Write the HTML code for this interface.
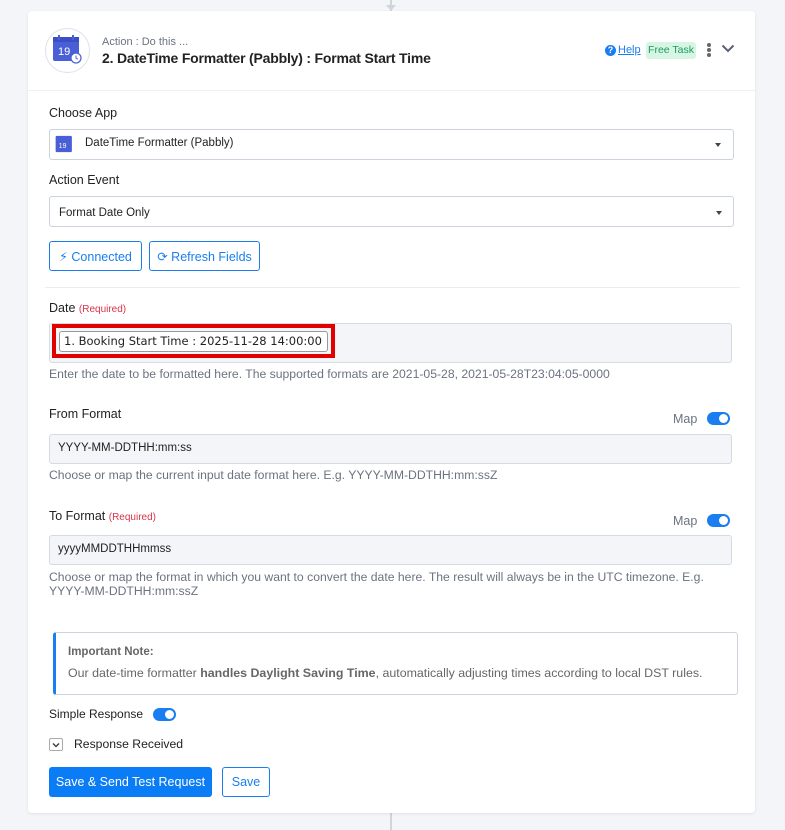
<!DOCTYPE html>
<html><head><style>
*{box-sizing:border-box;margin:0;padding:0}
body{width:785px;height:830px;background:#f3f5f8;font-family:"Liberation Sans",sans-serif;position:relative;overflow:hidden;color:#222}
.a{position:absolute}
.card{left:28px;top:11px;width:727px;height:802px;background:#fff;border-radius:4px;box-shadow:0 1px 3px rgba(0,0,0,.08)}
.lbl{font-size:12.5px;color:#222}
.box{border:1px solid #ccd3dc;border-radius:3px;background:#fff}
.gbox{border:1px solid #d5dbe3;border-radius:3px;background:#f3f5f8}
.help{font-size:12.2px;color:#6b7380}
.btn{border:1px solid #1a7ef0;border-radius:3px;color:#1a7ef0;font-size:12.5px;display:flex;align-items:center;justify-content:center}
.tog{width:23px;height:13px;border-radius:7px;background:#1a7ef0}
.tog::after{content:"";position:absolute;right:2px;top:2px;width:9px;height:9px;border-radius:50%;background:#fff}
.caret{width:0;height:0;border-left:3.5px solid transparent;border-right:3.5px solid transparent;border-top:4px solid #444}
</style></head><body>
<div class="a" style="left:390px;top:0;width:2px;height:11px;background:#cfd5dd"></div>
<div class="a" style="left:390px;top:813px;width:2px;height:17px;background:#cfd5dd"></div>
<div class="a" style="left:386px;top:5px;width:0;height:0;border-left:5px solid transparent;border-right:5px solid transparent;border-top:6px solid #cfd5dd"></div>
<div class="a card"></div>
<!-- header -->
<div class="a" style="left:45px;top:28px;width:45px;height:45px;border-radius:50%;border:1px solid #dde3ee;background:#fff"></div>
<svg class="a" style="left:52px;top:34px" width="32" height="32" viewBox="0 0 32 32"><rect x="1" y="3" width="26" height="24" rx="2" fill="#4a5fd6"/><rect x="1" y="3" width="26" height="5" fill="#3a4fc6"/><rect x="6" y="1" width="2" height="5" fill="#4a5fd6"/><rect x="20" y="1" width="2" height="5" fill="#4a5fd6"/><text x="6" y="21" font-size="11" fill="#fff" font-family="Liberation Sans">19</text><circle cx="24" cy="24" r="5" fill="#fff" stroke="#4a5fd6" stroke-width="1.2"/><path d="M24 21.5V24l1.8 1.2" stroke="#4a5fd6" fill="none" stroke-width="1"/></svg>
<div class="a" style="left:102px;top:36px;font-size:11px;color:#6b7380">Action : Do this ...</div>
<div class="a" style="left:102px;top:50px;font-size:14px;font-weight:bold;color:#222;letter-spacing:-0.2px">2. DateTime Formatter (Pabbly) : Format Start Time</div>
<div class="a" style="left:605px;top:45px;width:11px;height:11px;border-radius:50%;background:#1a7ef0;color:#fff;font-size:9px;font-weight:bold;text-align:center;line-height:11px">?</div>
<div class="a" style="left:618px;top:44px;font-size:11px;color:#1a7ef0;text-decoration:underline">Help</div>
<div class="a" style="left:646px;top:42px;width:50px;height:17px;border-radius:3px;background:#d6f5e4;color:#1e9b5a;font-size:10.5px;text-align:center;line-height:17px">Free Task</div>
<div class="a" style="left:707px;top:43px;width:4px;height:4px;border-radius:50%;background:#666;box-shadow:0 5px 0 #666,0 10px 0 #666"></div>
<svg class="a" style="left:721px;top:44px" width="14" height="9"><path d="M1.5 1.5L7 7l5.5-5.5" stroke="#5a6270" stroke-width="2" fill="none"/></svg>
<div class="a" style="left:28px;top:90px;width:727px;height:1px;background:#eaf0f7"></div>
<!-- choose app -->
<div class="a lbl" style="left:49px;top:106px">Choose App</div>
<div class="a box" style="left:49px;top:129px;width:685px;height:31px"></div>
<svg class="a" style="left:55px;top:134px" width="20" height="20" viewBox="0 0 32 32"><rect x="1" y="3" width="26" height="26" rx="2" fill="#4a5fd6"/><text x="6" y="22" font-size="11" fill="#fff" font-family="Liberation Sans">19</text></svg>
<div class="a" style="left:85px;top:137px;font-size:11.5px">DateTime Formatter (Pabbly)</div>
<div class="a caret" style="left:715px;top:143px"></div>
<div class="a lbl" style="left:49px;top:173px">Action Event</div>
<div class="a box" style="left:49px;top:196px;width:685px;height:31px"></div>
<div class="a" style="left:59px;top:207px;font-size:11.5px">Format Date Only</div>
<div class="a caret" style="left:716px;top:211px"></div>
<div class="a btn" style="left:49px;top:241px;width:93px;height:30px">⚡︎&nbsp;Connected</div>
<div class="a btn" style="left:149px;top:241px;width:111px;height:30px">⟳ Refresh Fields</div>
<div class="a" style="left:45px;top:287px;width:695px;height:1px;background:#eaeef3"></div>
<!-- date -->
<div class="a lbl" style="left:49px;top:301px">Date <span style="font-size:10px;color:#d9334a">(Required)</span></div>
<div class="a gbox" style="left:49px;top:323px;width:683px;height:40px"></div>
<div class="a" style="left:52px;top:324px;width:283px;height:34px;border:4px solid #e00000"></div>
<div class="a" style="left:59px;top:331px;width:269px;height:21px;border:1px solid #999;border-radius:3px;background:#fff;font-family:'DejaVu Sans',sans-serif;font-size:11.5px;line-height:19px;padding-left:4px;white-space:nowrap">1. Booking Start Time : 2025-11-28 14:00:00</div>
<div class="a help" style="left:49px;top:367px">Enter the date to be formatted here. The supported formats are 2021-05-28, 2021-05-28T23:04:05-0000</div>
<!-- from -->
<div class="a lbl" style="left:49px;top:407px">From Format</div>
<div class="a" style="left:673px;top:412px;font-size:12.5px;color:#6b7380">Map</div>
<div class="a tog" style="left:707px;top:412px"></div>
<div class="a gbox" style="left:49px;top:434px;width:683px;height:30px"></div>
<div class="a" style="left:58px;top:442px;font-size:11.5px">YYYY-MM-DDTHH:mm:ss</div>
<div class="a help" style="left:49px;top:468px">Choose or map the current input date format here. E.g. YYYY-MM-DDTHH:mm:ssZ</div>
<!-- to -->
<div class="a lbl" style="left:49px;top:509px">To Format <span style="font-size:10px;color:#d9334a">(Required)</span></div>
<div class="a" style="left:673px;top:514px;font-size:12.5px;color:#6b7380">Map</div>
<div class="a tog" style="left:707px;top:514px"></div>
<div class="a gbox" style="left:49px;top:535px;width:683px;height:30px"></div>
<div class="a" style="left:58px;top:543px;font-size:11.5px">yyyyMMDDTHHmmss</div>
<div class="a help" style="left:49px;top:570px;width:690px;line-height:14px">Choose or map the format in which you want to convert the date here. The result will always be in the UTC timezone. E.g.<br>YYYY-MM-DDTHH:mm:ssZ</div>
<!-- note -->
<div class="a" style="left:53px;top:632px;width:685px;height:63px;border:1px solid #ccd3dc;border-left:3px solid #1a7ef0;border-radius:3px"></div>
<div class="a" style="left:68px;top:646px;font-size:11.5px;font-weight:bold;color:#666">Important Note:</div>
<div class="a" style="left:68px;top:666px;font-size:12.4px;color:#666">Our date-time formatter <b>handles Daylight Saving Time</b>, automatically adjusting times according to local DST rules.</div>
<div class="a" style="left:49px;top:707px;font-size:12px;color:#222">Simple Response</div>
<div class="a tog" style="left:153px;top:708px"></div>
<div class="a" style="left:49px;top:738px;width:14px;height:13px;border:1px solid #aaa;border-radius:2px"></div>
<svg class="a" style="left:52px;top:742px" width="8" height="6"><path d="M1 1.5l3 3 3-3" stroke="#333" stroke-width="1.3" fill="none"/></svg>
<div class="a" style="left:74px;top:737px;font-size:12.2px;color:#222">Response Received</div>
<div class="a" style="left:49px;top:767px;width:163px;height:30px;background:#0a7cf5;border-radius:3px;color:#fff;font-size:12.5px;text-align:center;line-height:30px">Save &amp; Send Test Request</div>
<div class="a btn" style="left:222px;top:767px;width:48px;height:30px">Save</div>
</body></html>
